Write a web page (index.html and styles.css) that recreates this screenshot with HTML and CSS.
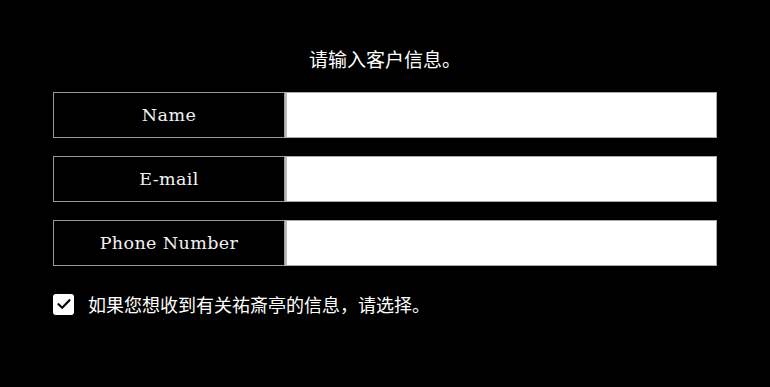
FILE: index.html
```html
<!DOCTYPE html>
<html lang="zh-CN">
<head>
    <meta charset="UTF-8">
    <meta name="viewport" content="width=device-width, initial-scale=1.0">
    <title>客户信息</title>
    <link rel="stylesheet" href="styles.css">
</head>
<body>

    <div class="container">
        <p class="title">请输入客户信息。</p>

        <div class="field">
            <label class="field-label" for="name">Name</label>
            <input class="field-input" id="name" type="text">
        </div>

        <div class="field">
            <label class="field-label" for="email">E-mail</label>
            <input class="field-input" id="email" type="text">
        </div>

        <div class="field">
            <label class="field-label" for="phone">Phone Number</label>
            <input class="field-input" id="phone" type="text">
        </div>

        <div class="agree">
            <span class="check">
                <svg width="16" height="16" viewBox="0 0 16 16">
                    <path d="M2.5 8.2 L6.2 11.8 L13.5 4.2" fill="none" stroke="#000" stroke-width="2.2" stroke-linecap="round" stroke-linejoin="round"/>
                </svg>
            </span>
            <span class="agree-text">如果您想收到有关祐斎亭的信息，请选择。</span>
        </div>
    </div>

</body>
</html>
```

FILE: styles.css
```css
body {
    margin: 0;
    background-color: #000;
    color: #fff;
    font-family: "Noto Sans CJK SC", "Noto Sans", sans-serif;
}
.container {
    width: 664px;
    margin: 0 auto;
    padding-top: 46px;
    box-sizing: border-box;
}
.title {
    margin: 0 0 20px;
    text-align: center;
    font-size: 19px;
    line-height: 26px;
}
.field {
    display: flex;
    height: 46px;
    margin-bottom: 18px;
}
.field-label {
    width: 232px;
    box-sizing: border-box;
    border: 1px solid #999;
    display: flex;
    align-items: center;
    justify-content: center;
    font-family: "DejaVu Serif", "Liberation Serif", serif;
    font-size: 17.5px;
    letter-spacing: 0.4px;
    color: #f2f2f2;
}
.field-input {
    flex: 1;
    margin: 0;
    border: 1px solid #aaa;
    border-left: 2px solid #bbb;
    background-color: #fff;
    outline: none;
}
.agree {
    display: flex;
    align-items: center;
    gap: 14px;
    margin-top: 27px;
}
.check {
    width: 21px;
    height: 21px;
    background-color: #fff;
    border-radius: 3px;
    display: flex;
    align-items: center;
    justify-content: center;
}
.agree-text {
    font-size: 18px;
    line-height: 22px;
}
```
